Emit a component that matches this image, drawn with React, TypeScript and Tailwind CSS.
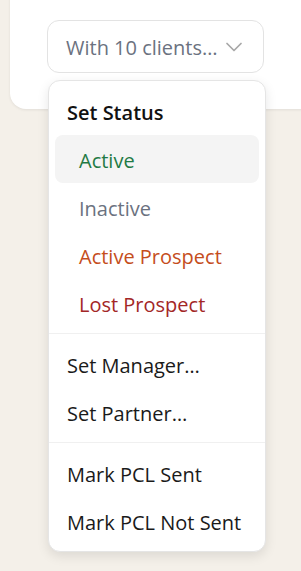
import React from "react";

function Chevron() {
  return (
    <svg width="28" height="28" viewBox="0 0 24 24" fill="none" stroke="#a8a8a8" strokeWidth="1.5" strokeLinecap="round" strokeLinejoin="round">
      <path d="m6 9 6 6 6-6" />
    </svg>
  );
}

const statusItem = "flex h-[48px] items-center pl-[24px] pt-[3px] text-[20px]";
const plainItem = "flex h-[48px] items-center px-[12px] pt-[3px] text-[20px] text-[#1a1a1a]";

export default function App() {
  return (
    <div className="h-[571px] w-full overflow-hidden bg-[#f4f0e9] font-['Open_Sans','Noto_Sans',sans-serif]">
      <div className="ml-[10px] mr-[-40px] mt-[-20px] h-[129px] rounded-2xl bg-white pl-[37px] pt-[40px] shadow-[0_1px_3px_rgba(0,0,0,0.08)]">
        <div className="relative w-[217px]">
          <button className="flex h-[53px] w-[217px] items-center justify-between rounded-xl border border-[#e3e3e3] bg-white pl-[18px] pr-[15px] text-[20px] text-[#6b7280]">
            <span className="pt-[2px]">With 10 clients…</span>
            <Chevron />
          </button>
          <div className="absolute left-[1px] top-[60px] z-10 w-[218px] rounded-xl border border-[#e5e5e5] bg-white p-[6px] shadow-[0_4px_12px_rgba(0,0,0,0.10)]">
            <div className="flex h-[48px] items-center px-[12px] pt-[3px] text-[20px] font-semibold text-[#111111]">Set Status</div>
            <div className={`${statusItem} rounded-lg bg-[#f4f4f4] text-[#1f7a44]`}>Active</div>
            <div className={`${statusItem} text-[#6b7280]`}>Inactive</div>
            <div className={`${statusItem} text-[#c54d1c]`}>Active Prospect</div>
            <div className={`${statusItem} text-[#a32727]`}>Lost Prospect</div>
            <div className="mx-[-6px] my-[6px] h-px bg-[#f0f0f0]" />
            <div className={plainItem}>Set Manager…</div>
            <div className={plainItem}>Set Partner…</div>
            <div className="mx-[-6px] my-[6px] h-px bg-[#f0f0f0]" />
            <div className={plainItem}>Mark PCL Sent</div>
            <div className={plainItem}>Mark PCL Not Sent</div>
          </div>
        </div>
      </div>
    </div>
  );
}
